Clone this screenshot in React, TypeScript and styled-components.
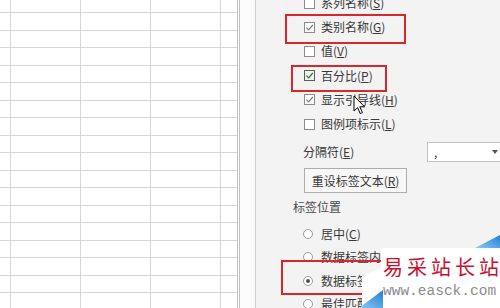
import { createGlobalStyle, styled } from 'styled-components';

const GlobalStyle = createGlobalStyle`
  html, body { margin: 0; padding: 0; background: #fff; }
  body { font-family: "Noto Sans CJK SC", "Noto Sans", sans-serif; }
`;

const Page = styled.div`
  position: relative;
  display: flex;
  width: 500px;
  height: 308px;
  overflow: hidden;
  background: #fff;
`;

const Sheet = styled.div`
  flex: none;
  display: grid;
  grid-template-columns: 11px 70px 70px 70px 16px;
  grid-template-rows: 13px;
  grid-auto-rows: 17.5px;
  align-content: start;
  width: 237px;
  border-right: 3px double #c4c4c4;
`;

const Cell = styled.div<{ $last?: boolean }>`
  box-sizing: border-box;
  border-bottom: 1px solid #d6d6d6;
  border-right: ${(p) => (p.$last ? 'none' : '1px solid #d6d6d6')};
`;

const Gutter = styled.div`
  flex: none;
  width: 15px;
  background: #fcfcfc;
`;

const Panel = styled.div`
  flex: 1;
  display: flex;
  flex-direction: column;
  padding-left: 37px;
  border-left: 1px solid #cdcdcd;
  background: #f3f3f3;
  color: #383838;
  font-size: 12px;

  & > * {
    flex: none;
  }
`;

const CheckList = styled.div`
  display: flex;
  flex-direction: column;
  margin-top: -9px;
`;

const CheckRow = styled.div`
  flex: none;
  display: flex;
  align-items: center;
  gap: 6px;
  height: 24.2px;
  padding-left: 11px;
`;

const Box = styled.span<{ $focus?: boolean }>`
  box-sizing: border-box;
  display: flex;
  align-items: center;
  justify-content: center;
  width: 11px;
  height: 11px;
  border: 1px solid ${(p) => (p.$focus ? '#5a5a5a' : '#8c8c8c')};
  background: ${(p) => (p.$focus ? '#eef6ef' : '#fff')};
`;

const Label = styled.span`
  line-height: 16px;
  white-space: nowrap;
`;

const Key = styled.span`
  text-decoration: underline;
`;

const SeparatorRow = styled.div`
  display: flex;
  align-items: center;
  height: 20px;
  margin-top: 6px;
  padding-left: 10px;
`;

const SeparatorLabel = styled(Label)`
  flex: none;
  width: 124px;
`;

const Dropdown = styled.div`
  flex: none;
  box-sizing: border-box;
  display: flex;
  align-items: center;
  justify-content: space-between;
  width: 80px;
  height: 20px;
  padding: 0 8px 0 6px;
  border: 1px solid #c2c2c2;
  background: #fff;
  line-height: 14px;
`;

const Arrow = styled.span`
  width: 0;
  height: 0;
  border-left: 3.5px solid transparent;
  border-right: 3.5px solid transparent;
  border-top: 4px solid #555;
`;

const ResetButton = styled.button`
  align-self: flex-start;
  box-sizing: border-box;
  width: 103px;
  height: 25px;
  margin: 6px 0 0 11px;
  padding: 0;
  border: 1px solid #adadad;
  background: #f7f7f7;
  color: #383838;
  font: inherit;
  font-size: 12px;
`;

const SectionTitle = styled.div`
  height: 16px;
  margin-top: 6px;
  line-height: 16px;
  color: #4a4a4a;
`;

const RadioList = styled.div`
  display: flex;
  flex-direction: column;
  margin-top: 7px;
`;

const RadioRow = styled.div`
  flex: none;
  display: flex;
  align-items: center;
  gap: 8px;
  height: 23.5px;
  padding-left: 10px;
`;

const Radio = styled.span<{ $on?: boolean }>`
  box-sizing: border-box;
  display: flex;
  align-items: center;
  justify-content: center;
  width: 10px;
  height: 10px;
  border: 1px solid #9a9a9a;
  border-radius: 50%;
  background: #fff;

  &::after {
    content: '';
    display: ${(p) => (p.$on ? 'block' : 'none')};
    width: 4px;
    height: 4px;
    border-radius: 50%;
    background: #505050;
  }
`;

const Annotation = styled.div<{ $x: number; $y: number; $w: number; $h: number }>`
  position: absolute;
  left: ${(p) => p.$x}px;
  top: ${(p) => p.$y}px;
  box-sizing: border-box;
  width: ${(p) => p.$w}px;
  height: ${(p) => p.$h}px;
  border: 2px solid #d8282c;
`;

const Pointer = styled.svg`
  position: absolute;
  left: 353px;
  top: 95px;
`;

const Watermark = styled.div`
  position: absolute;
  left: 355px;
  top: 235px;
  width: 145px;
  height: 73px;
`;

const WatermarkArt = styled.svg`
  position: absolute;
  inset: 0;
`;

const WatermarkText = styled.div`
  position: relative;
  display: flex;
  flex-direction: column;
  padding: 19px 0 0 28px;
`;

const Brand = styled.span`
  font-size: 20px;
  line-height: 26px;
  letter-spacing: 4px;
  color: #c8102e;
  white-space: nowrap;
`;

const Site = styled.span`
  margin-top: 3px;
  font-family: "Liberation Mono", monospace;
  font-size: 14.5px;
  line-height: 16px;
  color: #8c8c8c;
  white-space: nowrap;
`;

function Check({ color }: { color: string }) {
  return (
    <svg width="9" height="9" viewBox="0 0 9 9">
      <path d="M1.4 4.6 L3.6 6.8 L7.8 2" fill="none" stroke={color} strokeWidth="1.2" />
    </svg>
  );
}

const checks = [
  { text: '系列名称', key: 'S', on: false },
  { text: '类别名称', key: 'G', on: true },
  { text: '值', key: 'V', on: false },
  { text: '百分比', key: 'P', on: true, focus: true },
  { text: '显示引导线', key: 'H', on: true },
  { text: '图例项标示', key: 'L', on: false },
];

const radios = [
  { text: '居中', key: 'C', on: false },
  { text: '数据标签内', key: 'I', on: false },
  { text: '数据标签外', key: 'O', on: true },
  { text: '最佳匹配', key: 'F', on: false },
];

export default function App() {
  const rows = Array.from({ length: 18 });
  const cols = [0, 1, 2, 3, 4];

  return (
    <>
      <GlobalStyle />
      <Page>
        <Sheet>
          {rows.map((_, r) =>
            cols.map((c) => <Cell key={`${r}-${c}`} $last={c === 4} />)
          )}
        </Sheet>
        <Gutter />
        <Panel>
          <CheckList>
            {checks.map((item) => (
              <CheckRow key={item.key}>
                <Box $focus={item.focus}>
                  {item.on && <Check color={item.focus ? '#2f6b3c' : '#7a7a7a'} />}
                </Box>
                <Label>
                  {item.text}(<Key>{item.key}</Key>)
                </Label>
              </CheckRow>
            ))}
          </CheckList>

          <SeparatorRow>
            <SeparatorLabel>
              分隔符(<Key>E</Key>)
            </SeparatorLabel>
            <Dropdown>
              <span>,</span>
              <Arrow />
            </Dropdown>
          </SeparatorRow>

          <ResetButton>
            重设标签文本(<Key>R</Key>)
          </ResetButton>

          <SectionTitle>标签位置</SectionTitle>
          <RadioList>
            {radios.map((item) => (
              <RadioRow key={item.key}>
                <Radio $on={item.on} />
                <Label>
                  {item.text}(<Key>{item.key}</Key>)
                </Label>
              </RadioRow>
            ))}
          </RadioList>
        </Panel>

        <Annotation $x={285} $y={14} $w={121} $h={30} />
        <Annotation $x={291} $y={65} $w={96} $h={27} />
        <Annotation $x={281} $y={260} $w={110} $h={35} />

        <Pointer width="13" height="20" viewBox="0 0 13 20">
          <path
            d="M1 1 L1 16 L4.6 12.6 L7.2 18.6 L9.4 17.6 L6.8 11.8 L11.6 11.8 Z"
            fill="#fff"
            stroke="#000"
            strokeWidth="1"
            strokeLinejoin="round"
          />
        </Pointer>

        <Watermark>
          <WatermarkArt width="145" height="73" viewBox="0 0 145 73">
            <defs>
              <linearGradient id="wmBlue" x1="0" y1="1" x2="1" y2="0">
                <stop offset="0" stopColor="#8ccaf4" />
                <stop offset="1" stopColor="#1f7fd6" />
              </linearGradient>
            </defs>
            <polygon points="120,13 145,13 145,0" fill="url(#wmBlue)" />
            <polygon points="26,13 145,13 145,73 7,73 7,41 26,33" fill="#fff" />
            <polygon points="4,73 28,73 28,55" fill="url(#wmBlue)" />
          </WatermarkArt>
          <WatermarkText>
            <Brand>易采站长站</Brand>
            <Site>www.easck.com</Site>
          </WatermarkText>
        </Watermark>
      </Page>
    </>
  );
}
